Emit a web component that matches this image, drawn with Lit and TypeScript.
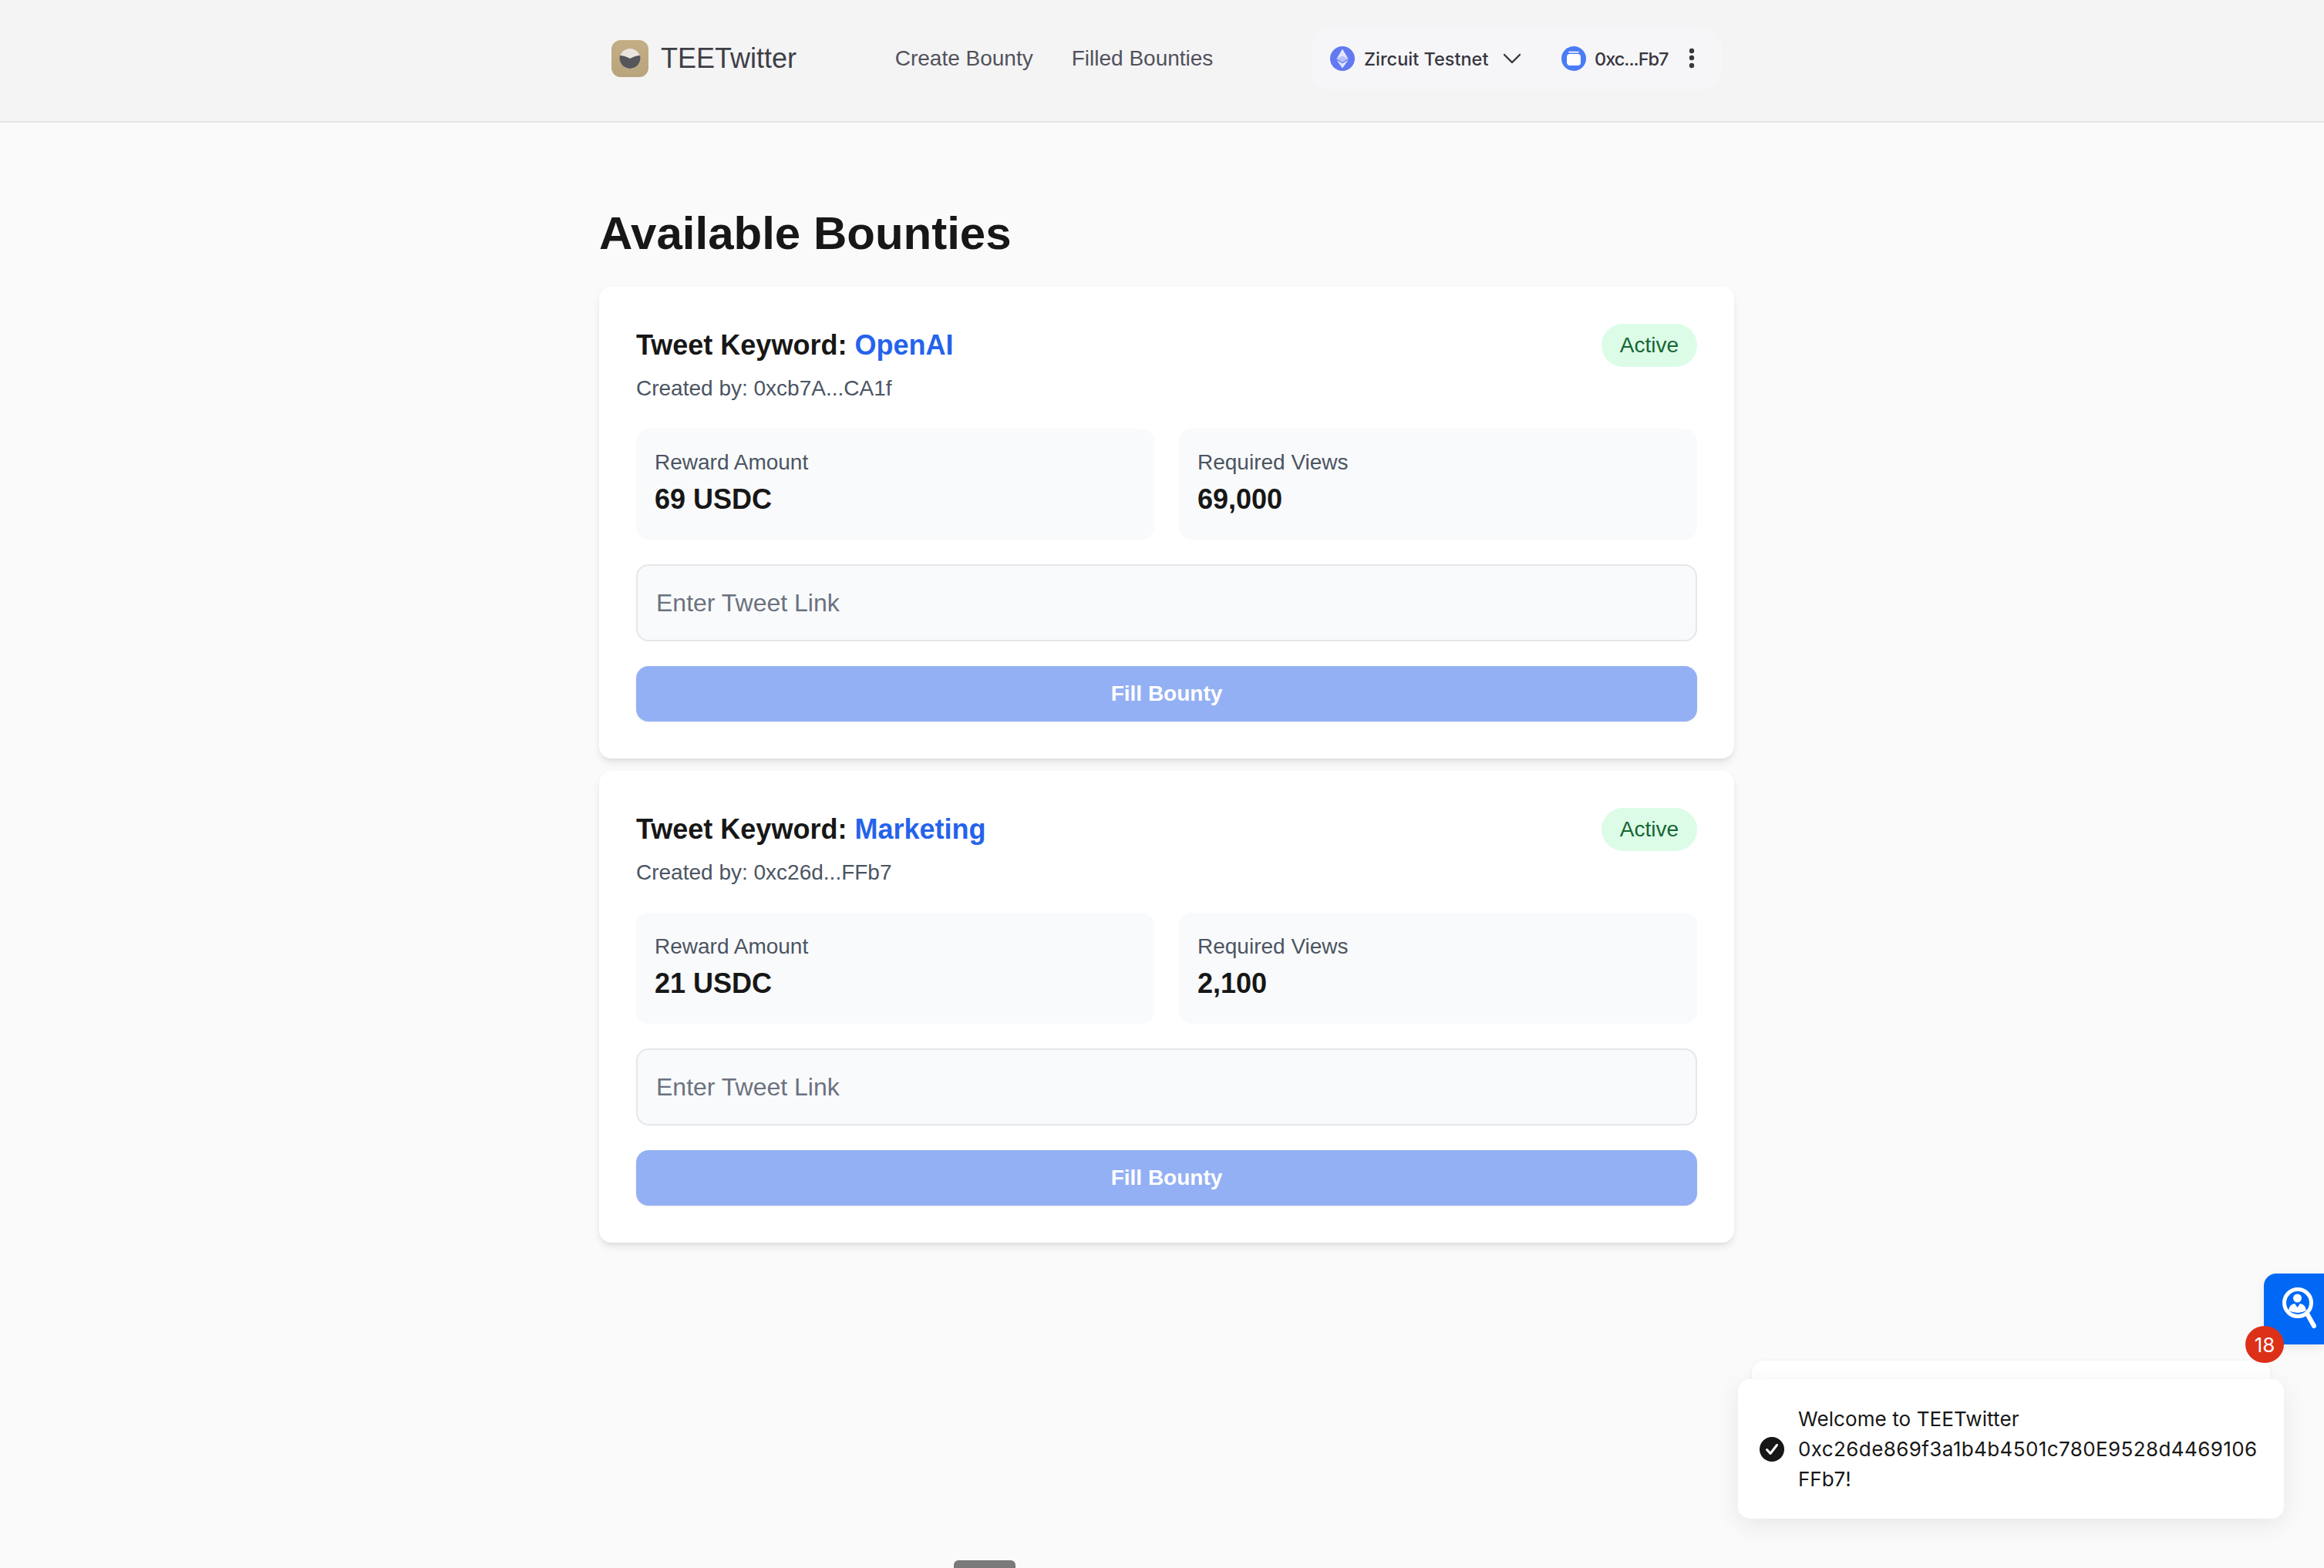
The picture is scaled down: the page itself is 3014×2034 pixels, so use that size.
import { LitElement, html, css } from "lit";
import { customElement } from "lit/decorators.js";

const bounties = [
  { keyword: "OpenAI", creator: "0xcb7A...CA1f", reward: "69 USDC", views: "69,000" },
  { keyword: "Marketing", creator: "0xc26d...FFb7", reward: "21 USDC", views: "2,100" },
];

@customElement("app-root")
export class AppRoot extends LitElement {
  static styles = css`
    :host {
      display: block;
      font-family: "Liberation Sans", Arial, sans-serif;
      background: #fafafa;
      min-height: 2034px;
      height: 2034px;
      overflow: hidden;
      position: relative;
      color: #171717;
    }
    * { box-sizing: border-box; }
    .header {
      height: 159px;
      background: #f4f4f5;
      border-bottom: 2px solid #e4e4e4;
      padding-left: 793px;
      display: flex;
      align-items: center;
    }
    .header-inner {
      width: 1440px;
      display: flex;
      align-items: center;
      justify-content: space-between;
      margin-top: -5px;
    }
    .brand { display: flex; align-items: center; gap: 16px; font-size: 36px; color: #3f3f46; }
    .brand svg { display: block; }
    .nav { display: flex; gap: 50px; font-size: 28px; color: #52525b; }
    .wallet {
      width: 532px;
      height: 80px;
      border-radius: 24px;
      background: #f6f6f8;
      display: flex;
      align-items: center;
      padding-left: 24px;
      font-family: Inter, "Noto Sans", sans-serif;
      font-weight: 500;
      font-size: 23.5px;
      color: #36363f;
    }
    .wallet svg { display: block; flex: none; }
    .net { margin-left: 12px; width: 162px; white-space: nowrap; }
    .chev { margin-left: 18px; }
    .wal-icon { margin-left: 52px; }
    .addr { margin-left: 11px; width: 109px; white-space: nowrap; letter-spacing: -1px; }
    .dots { margin-left: 13px; }
    .main { padding: 108px 0 0 777px; width: 2249px; }
    h1 { margin: 0 0 33px; font-size: 60px; line-height: 72px; font-weight: 700; color: #171717; }
    .list { display: flex; flex-direction: column; gap: 16px; }
    .card {
      background: #fff;
      border-radius: 16px;
      padding: 48px;
      box-shadow: 0 6px 12px -2px rgba(0, 0, 0, 0.1), 0 3px 6px -3px rgba(0, 0, 0, 0.08);
    }
    .top { display: flex; justify-content: space-between; align-items: flex-start; }
    .title { font-size: 36px; line-height: 56px; font-weight: 700; color: #171717; }
    .kw { color: #2563eb; }
    .by { margin-top: 8px; font-size: 28px; line-height: 40px; color: #4b5563; }
    .badge {
      height: 56px;
      padding: 0 24px;
      border-radius: 28px;
      background: #dcfce7;
      color: #166534;
      font-size: 28px;
      line-height: 56px;
    }
    .stats { margin-top: 32px; display: grid; grid-template-columns: 1fr 1fr; gap: 32px; }
    .stat { background: #f9fafb; border-radius: 16px; padding: 24px; }
    .label { font-size: 28px; line-height: 40px; color: #4b5563; }
    .value { font-size: 36px; line-height: 56px; font-weight: 700; color: #171717; }
    .input {
      margin-top: 32px;
      height: 100px;
      border: 2px solid #e5e7eb;
      border-radius: 16px;
      background: #f9fafb;
      padding: 0 24px;
      display: flex;
      align-items: center;
      font-size: 32px;
      color: #6b7280;
    }
    .btn {
      margin-top: 32px;
      height: 72px;
      border-radius: 16px;
      background: #94b0f4;
      color: #fff;
      font-size: 28px;
      font-weight: 700;
      display: flex;
      align-items: center;
      justify-content: center;
      box-shadow: 0 1px 3px rgba(0, 0, 0, 0.06);
    }
    .float {
      position: absolute;
      left: 2936px;
      top: 1652px;
      width: 78px;
      height: 92px;
      background: #0068f5;
      border-radius: 16px 0 0 16px;
      box-shadow: 0 4px 12px rgba(0, 0, 0, 0.08);
    }
    .float svg { display: block; }
    .count {
      position: absolute;
      left: 2912px;
      top: 1720px;
      width: 50px;
      height: 48px;
      border-radius: 50%;
      background: #dc3018;
      color: #fff;
      font-family: Inter, sans-serif;
      font-size: 26px;
      display: flex;
      align-items: center;
      justify-content: center;
      z-index: 3;
    }
    .toast-back {
      position: absolute;
      left: 2272px;
      top: 1765px;
      width: 672px;
      height: 60px;
      background: #fff;
      border-radius: 16px;
      box-shadow: 0 2px 8px rgba(0, 0, 0, 0.06);
    }
    .toast {
      position: absolute;
      left: 2254px;
      top: 1789px;
      width: 708px;
      height: 181px;
      background: #fff;
      border-radius: 16px;
      box-shadow: 0 8px 32px rgba(0, 0, 0, 0.08);
      display: flex;
      align-items: center;
      gap: 18px;
      padding-left: 28px;
      font-family: Inter, sans-serif;
      font-size: 26px;
      line-height: 39px;
      color: #171717;
    }
    .toast svg { display: block; flex: none; }
    .toast span { display: block; white-space: nowrap; }
    .toast .hash { letter-spacing: 0.4px; }
    .toast .hello { letter-spacing: 0.1px; }
    .handle {
      position: absolute;
      left: 1237px;
      top: 2024px;
      width: 80px;
      height: 10px;
      background: #7a7a7a;
      border-radius: 6px 6px 0 0;
    }
  `;

  render() {
    return html`
      <header class="header">
        <div class="header-inner">
          <div class="brand">
            <svg width="48" height="48" viewBox="0 0 48 48">
              <defs>
                <linearGradient id="lg" x1="0" y1="0" x2="0" y2="1">
                  <stop offset="0" stop-color="#c4ae86" />
                  <stop offset="1" stop-color="#b8a47c" />
                </linearGradient>
              </defs>
              <rect width="48" height="48" rx="12" fill="url(#lg)" />
              <circle cx="24" cy="24" r="13" fill="#e9e5de" />
              <path d="M11 20 Q17 20 24 24 Q31 20 37 20 A13.6 13.6 0 0 1 24 37 A13.6 13.6 0 0 1 11 20Z" fill="#55555a" />
            </svg>
            TEETwitter
          </div>
          <nav class="nav"><span>Create Bounty</span><span>Filled Bounties</span></nav>
          <div class="wallet">
            <svg width="32" height="32" viewBox="0 0 32 32">
              <circle cx="16" cy="16" r="16" fill="#6379f1" />
              <path d="M16 3.5 L8.5 16.3 L16 20.5 L23.5 16.3Z" fill="#e3e7fc" />
              <path d="M16 12.5 L8.5 16.3 L16 20.5 L23.5 16.3Z" fill="#b6c1f8" />
              <path d="M16 22.2 L8.5 18 L16 28.5 L23.5 18Z" fill="#e3e7fc" />
            </svg>
            <span class="net">Zircuit Testnet</span>
            <svg class="chev" width="24" height="14" viewBox="0 0 24 14">
              <path d="M2 2 L12 12 L22 2" fill="none" stroke="#36363f" stroke-width="2.4" stroke-linecap="round" stroke-linejoin="round" />
            </svg>
            <svg class="wal-icon" width="32" height="32" viewBox="0 0 32 32">
              <circle cx="16" cy="16" r="16" fill="#4a7cf5" />
              <rect x="7" y="10" width="18" height="15" rx="4" fill="#fff" />
              <path d="M10 7.6 H22" stroke="#fff" stroke-width="1.6" stroke-linecap="round" />
            </svg>
            <span class="addr">0xc...Fb7</span>
            <svg class="dots" width="8" height="28" viewBox="0 0 8 28">
              <circle cx="4" cy="4" r="3.2" fill="#36363f" />
              <circle cx="4" cy="13" r="3.2" fill="#36363f" />
              <circle cx="4" cy="23" r="3.2" fill="#36363f" />
            </svg>
          </div>
        </div>
      </header>
      <main class="main">
        <h1>Available Bounties</h1>
        <div class="list">
          ${bounties.map(
            (b) => html`
              <section class="card">
                <div class="top">
                  <div class="title">Tweet Keyword: <span class="kw">${b.keyword}</span></div>
                  <div class="badge">Active</div>
                </div>
                <div class="by">Created by: ${b.creator}</div>
                <div class="stats">
                  <div class="stat">
                    <div class="label">Reward Amount</div>
                    <div class="value">${b.reward}</div>
                  </div>
                  <div class="stat">
                    <div class="label">Required Views</div>
                    <div class="value">${b.views}</div>
                  </div>
                </div>
                <div class="input">Enter Tweet Link</div>
                <div class="btn">Fill Bounty</div>
              </section>
            `
          )}
        </div>
      </main>
      <div class="float">
        <svg width="78" height="92" viewBox="0 0 78 92">
          <circle cx="44" cy="38" r="17.5" fill="none" stroke="#fff" stroke-width="5" />
          <path d="M56 52 L65 68" stroke="#fff" stroke-width="6" stroke-linecap="round" />
          <circle cx="43.5" cy="32" r="5.5" fill="#fff" />
          <path d="M32 48 Q33 40 40 39 L43.5 44 L47 39 Q54 40 55 48 Q44 54 32 48Z" fill="#fff" />
        </svg>
      </div>
      <div class="count">18</div>
      <div class="toast-back"></div>
      <div class="toast">
        <svg width="32" height="32" viewBox="0 0 32 32">
          <circle cx="16" cy="16" r="16" fill="#171717" />
          <path d="M9.5 16.5 L14 21.5 L22.5 10.5" fill="none" stroke="#fff" stroke-width="3" stroke-linecap="round" stroke-linejoin="round" />
        </svg>
        <div>
          <span class="hello">Welcome to TEETwitter</span>
          <span class="hash">0xc26de869f3a1b4b4501c780E9528d4469106</span>
          <span>FFb7!</span>
        </div>
      </div>
      <div class="handle"></div>
    `;
  }
}
